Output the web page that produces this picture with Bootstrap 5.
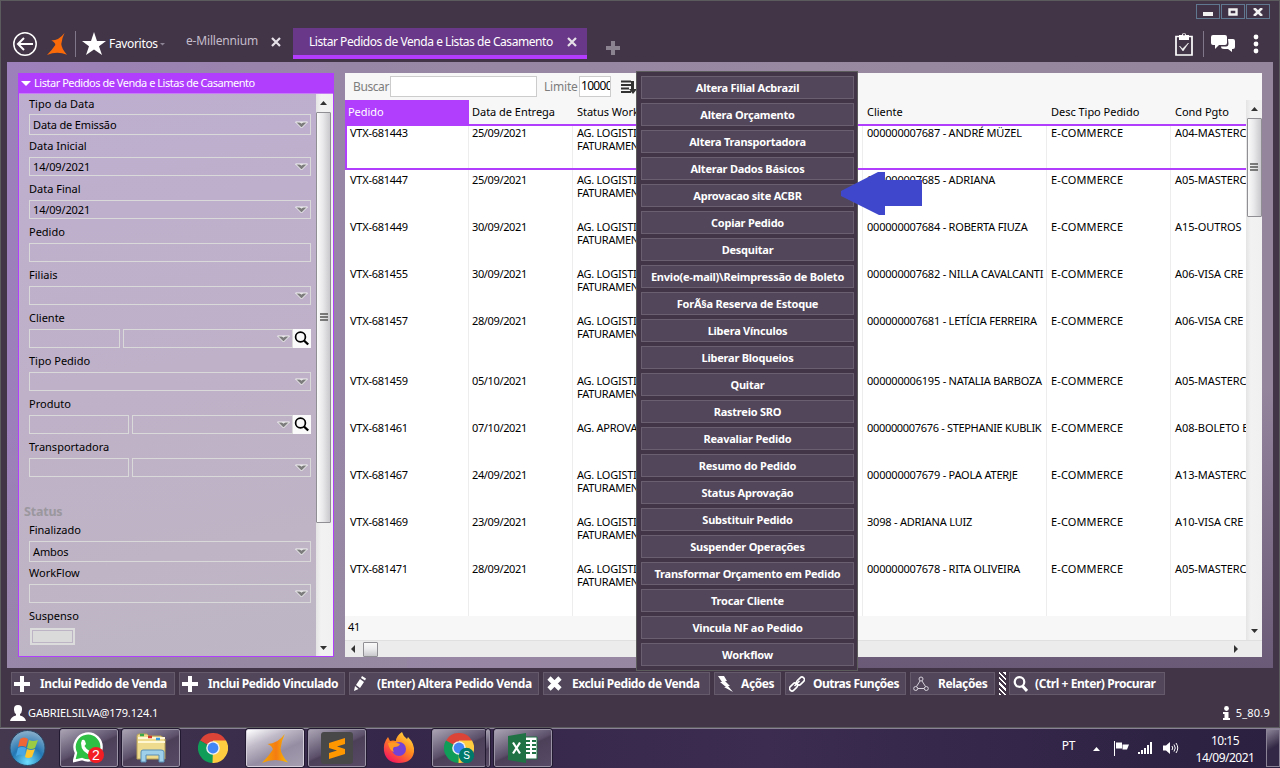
<!DOCTYPE html>
<html lang="pt-BR">
<head>
<meta charset="utf-8">
<title>e-Millennium</title>
<link href="https://cdn.jsdelivr.net/npm/bootstrap@5.3.0/dist/css/bootstrap.min.css" rel="stylesheet">
<style>
body{width:1280px;height:768px;overflow:hidden;font-family:"Noto Sans","Open Sans",sans-serif;font-size:11px;line-height:13px;color:#000;background:#2c2140}
svg{display:block;flex:none}
.win{height:728px;background:#423547;border:1px solid #5b5b5d;color:#fff}
.titlebar{height:27px;padding:3px 9px 0 0;gap:1px}
.wbtn{width:24px;height:15px;border:1px solid #607890;background:#403347}
.topbar{height:34px;padding-left:11px}
.vsep{width:1px;height:26px;background:#80788a}
.tabtxt{font-size:12px;line-height:16px}
.tab-on{width:294px;height:31px;background:#6a3889;border-bottom:4px solid #b43cff;padding:0 10px 0 16px}
.work{height:606px;margin:0 6px;padding:11px;gap:11px;
 background:linear-gradient(180deg,transparent 60%,rgba(150,138,160,.7) 100%) left/400px 100% no-repeat,linear-gradient(0deg,#6a5a77 0,rgba(106,90,119,0) 280px) right/500px 100% no-repeat,linear-gradient(90deg,#9c80bb 0,#9886a6 340px,#9888a0 800px,#94849c 100%)}
.side{width:316px;height:584px;border:1px solid #b13efd;background:linear-gradient(170deg,#bdaed0,#bfb1c8 50%,#beb6c4)}
.side-h{height:20px;background:#b13efd;color:#fff;border-bottom:1px solid #c77bf6;padding-left:2px}
.fields{width:297px;padding-left:10px;height:562px;color:#000;overflow:hidden}
.lab{height:22px;line-height:22px;letter-spacing:0}
.ctl{height:19px;margin-bottom:2px;border:1px solid #d9d9d9;padding:0 2px 0 3px;width:282px;letter-spacing:-.15px}
.ctl-t{height:21px;margin-bottom:0}
.chev{width:13px;height:8px;margin-left:auto}
.look{width:18px;height:19px;background:#fafafa}
.sb{background:linear-gradient(90deg,#e4e4e4,#f2f2f2 30%,#f0f0f0);color:#333}
.thumbv{width:15px;border:1px solid #8f8f94;border-radius:1px;background:linear-gradient(90deg,#fafafa,#e9e9eb 45%,#c9c9cd)}
.thumbh{width:15px;height:15px;border:1px solid #8f8f94;border-radius:1px;background:linear-gradient(180deg,#fafafa,#ececee 45%,#c9c9cd)}
.sheet{width:917px;height:584px;background:#f7f7f7;color:#000}
.inp{border:1px solid #ccc;background:#fff;height:21px}
.grid-h{height:24px;line-height:24px;letter-spacing:-.03px}
.c1{width:124px;padding-left:5px}.c2{width:104px;padding-left:3px}.c3{width:290px;padding-left:4px}.c4{width:184px;padding-left:4px}.c5{width:124px;padding-left:4px}.c6{width:75px;padding-left:4px}
.c1,.c2,.c3,.c4,.c5,.c6{flex:none;overflow:hidden;white-space:nowrap}
.grid-r{height:47px;background:#fff;letter-spacing:-.26px}
.grid-r>div{padding-top:3px;border-right:1px solid #ededed}
.grid-r>.c2{letter-spacing:-.36px}
.grid-r>.c4{letter-spacing:-.21px}
.grid-r>.c5{letter-spacing:.12px}
.grid-r>.c6{border-right:0;letter-spacing:-.08px}
.grid-r.sel{height:46px;border:2px solid #b13efd;border-right:0}
.grid-r.sel>div{padding-top:0}.grid-r.sel .c1{width:122px;padding-left:3px}
.tall{height:60px}.last{height:57px}
.acts{height:32px;padding:4px 0 0 10px}
.act{height:23px;border:1px solid #655a6b;background:#51465a;color:#fff;font-size:12px;font-weight:700;white-space:nowrap;letter-spacing:-.42px}
.grip{width:7px;height:23px;background:repeating-linear-gradient(45deg,#fff 0 1.600px,#423547 1.600px 3.800px)}
.stat{height:27px;padding:0 9px 2px 9px}
.menu{left:636px;top:71px;width:222px;height:600px;background:#423547;border:1px solid #5c5c5c;padding:4px 3px 4px 4px;gap:4px;z-index:5}
.mi{height:23px;flex:none;border:1px solid #6a5f70;background:#51465a;color:#fff;font-weight:700;letter-spacing:-.23px;display:flex;align-items:center;justify-content:center;white-space:nowrap}
.arrow{left:840px;top:171px;z-index:6}
.task{height:40px;background:linear-gradient(90deg,#44384f,#35274a 30%,#3b2c50 60%,#2b2040);border-top:1px solid #8b8196}
.tb{width:58px;height:38px;margin-right:4px;border:1px solid #9b93a6;border-radius:2px;outline:1px solid #221a30;background:linear-gradient(155deg,#aaa3b3 0,#7b7288 28%,#5b4f6a 48%,#4c4059 52%,#564a66 100%)}
.tb-on{background:linear-gradient(155deg,#fff 0,#c0bac8 30%,#958da2 60%,#a59eb0 100%);border-color:#d5d0dc}
.tb-off{background:none;border-color:transparent;outline:0}
.clock{font-size:12px;line-height:17px;letter-spacing:-.5px;color:#fff}
</style>
</head>
<body class="d-flex flex-column position-relative">
<svg width="0" height="0" class="position-absolute">
<symbol id="chev" viewBox="0 0 13 8"><path d="M.5 1h12L6.500 7z" fill="#7c7c7c" stroke="#f4f4f4"/><path d="M4.500 1h4L6.500 2.800z" fill="#e8e8e8"/></symbol>
<symbol id="mag" viewBox="0 0 18 19"><circle cx="7.500" cy="8" r="4.900" fill="none" stroke="#000" stroke-width="1.700"/><path d="M11 11.500l4.200 4" stroke="#000" stroke-width="2.400"/></symbol>
<symbol id="plus" viewBox="0 0 16 16"><path d="M6 0h4v6h6v4h-6v6H6v-6H0V6h6z" fill="#fff"/></symbol>
<symbol id="x" viewBox="0 0 10 10"><path d="M1 1l8 8M9 1L1 9" stroke="#e6e1e9" stroke-width="2.200"/></symbol>
<symbol id="up" viewBox="0 0 7 4"><path d="M0 4L3.500 0 7 4z" fill="#333"/></symbol>
<symbol id="grp" viewBox="0 0 8 9"><path d="M0 1h8M0 4h8M0 7h8" stroke="#555" stroke-width="1.400"/></symbol>
<symbol id="chrome" viewBox="0 0 30 30"><path d="M15 15L2 7.500A15 15 0 0 1 28 7.500z" fill="#db4437"/><path d="M15 15L2 7.500A15 15 0 0 0 15 30l6.500-11z" fill="#0f9d58"/><path d="M15 15l-.5 15A15 15 0 0 0 28 7.500H15z" fill="#ffcd40"/><circle cx="15" cy="15" r="6.800" fill="#f1f1f1"/><circle cx="15" cy="15" r="5.400" fill="#4285f4"/></symbol>
<symbol id="mil" viewBox="0 0 20 22" preserveAspectRatio="none"><path d="M17.500 0Q12 7.500 4.300 7.500 8.500 9.500 8.300 12 5 17 0 22q10-4.500 20-.3-5.500-6-5.700-10.700Q15 5 17.500 0z"/></symbol>
</svg>

<div class="win flex-shrink-0">
 <div class="titlebar d-flex justify-content-end">
  <div class="wbtn d-flex align-items-center justify-content-center"><svg width="10" height="9"><path d="M0 5h10v4H0z" fill="#f2f2f2"/></svg></div>
  <div class="wbtn d-flex align-items-center justify-content-center"><svg width="10" height="8"><path d="M1.500 1.500h7v5h-7z" fill="none" stroke="#f2f2f2" stroke-width="2.400"/></svg></div>
  <div class="wbtn d-flex align-items-center justify-content-center"><svg width="10" height="8"><path d="M1 0l8 8M9 0L1 8" stroke="#f2f2f2" stroke-width="2.600"/></svg></div>
 </div>
 <div class="topbar d-flex">
  <div class="d-flex align-items-center flex-shrink-0" style="height:32px;width:154px">
   <svg width="26" height="26" viewBox="0 0 26 26" fill="none" stroke="#fff"><circle cx="13" cy="13" r="11.200" stroke-width="1.500"/><path d="M21 13H6M12 7l-6 6 6 6" stroke-width="2"/></svg>
   <svg style="margin-left:9px" width="20" height="22" fill="#fb6a09"><use href="#mil" width="20" height="22"/></svg>
   <div class="vsep" style="margin:0 6px 0 8px"></div>
   <svg width="24" height="24" viewBox="0 0 24 24"><path d="M12 0l3 9h9l-7 5.200 3 8.800-8-5.500L4 23l3-8.800L0 9h9z" fill="#fff"/></svg>
   <span class="tabtxt" style="margin-left:3px;letter-spacing:-.33px">Favoritos</span>
   <svg width="6" height="4" style="margin-left:2px"><path d="M0 1h5L2.500 3.500z" fill="#8c8394"/></svg>
  </div>
  <div class="d-flex align-items-start flex-shrink-0" style="margin-left:20px;padding-top:5px;width:107px">
   <span class="tabtxt" style="color:#c5bdcb;letter-spacing:-.18px">e-Millennium</span><svg class="ms-auto" style="margin:4px 12px 0 0" width="10" height="10"><use href="#x"/></svg>
  </div>
  <div class="tab-on d-flex align-items-center"><span class="tabtxt text-nowrap" style="letter-spacing:-.45px">Listar Pedidos de Venda e Listas de Casamento</span><svg class="ms-auto" width="10" height="10"><use href="#x"/></svg></div>
  <svg style="margin:13px 0 0 19px" width="14" height="14" viewBox="0 0 14 14"><path d="M5 0h4v5h5v4H9v5H5V9H0V5h5z" fill="#8b838f"/></svg>
  <div class="d-flex align-items-center ms-auto" style="height:32px;padding-right:20px">
   <svg width="18" height="24" viewBox="0 0 18 24"><path d="M1 4.500h16V23H1z" fill="none" stroke="#fff" stroke-width="1.700"/><path d="M4 3h3a2 2 0 0 1 4 0h3v5H4z" fill="#fff"/><circle cx="9" cy="2.500" r="1" fill="#423547"/><path d="M4.500 14l3 3 6-6-5.500 8z" fill="#fff" stroke="#fff" stroke-width=".6"/></svg>
   <div class="vsep" style="margin:0 7px 0 10px"></div>
   <svg width="25" height="18" viewBox="0 0 25 18" fill="#fff"><path d="M2 0h12q2 0 2 2v6q0 2-2 2H8l-4 4v-4H2Q0 10 0 8V2q0-2 2-2z"/><path d="M17 4h5q2 0 2 2v6q0 2-2 2h-1v3l-4-3h-4q-3 0-3-2.500h5q2.500 0 2.500-3z"/></svg>
   <svg style="margin-left:17px" width="6" height="20" fill="#fff"><circle cx="3" cy="3" r="2.400"/><circle cx="3" cy="10" r="2.400"/><circle cx="3" cy="17" r="2.400"/></svg>
  </div>
 </div>

 <div class="work d-flex">
  <div class="side flex-shrink-0">
   <div class="side-h d-flex align-items-center"><svg width="10" height="5"><path d="M0 0h10L5 5z" fill="#fff"/></svg><span class="text-nowrap" style="letter-spacing:-.47px;margin-left:3px;padding-bottom:3px">Listar Pedidos de Venda e Listas de Casamento</span></div>
   <div class="d-flex">
    <div class="fields">
     <div class="lab" style="height:20px;line-height:19px">Tipo da Data</div><div class="ctl ctl-t d-flex align-items-center">Data de Emissão<svg class="chev"><use href="#chev"/></svg></div>
     <div class="lab">Data Inicial</div><div class="ctl d-flex align-items-center">14/09/2021<svg class="chev"><use href="#chev"/></svg></div>
     <div class="lab">Data Final</div><div class="ctl d-flex align-items-center">14/09/2021<svg class="chev"><use href="#chev"/></svg></div>
     <div class="lab">Pedido</div><div class="ctl"></div>
     <div class="lab">Filiais</div><div class="ctl d-flex align-items-center"><svg class="chev"><use href="#chev"/></svg></div>
     <div class="lab">Cliente</div>
     <div class="d-flex"><div class="ctl" style="width:91px;margin-right:3px"></div><div class="ctl d-flex align-items-center" style="width:170px"><svg class="chev"><use href="#chev"/></svg></div><div class="look"><svg width="18" height="19"><use href="#mag"/></svg></div></div>
     <div class="lab">Tipo Pedido</div><div class="ctl d-flex align-items-center"><svg class="chev"><use href="#chev"/></svg></div>
     <div class="lab">Produto</div>
     <div class="d-flex"><div class="ctl" style="width:100px;margin-right:3px"></div><div class="ctl d-flex align-items-center" style="width:161px"><svg class="chev"><use href="#chev"/></svg></div><div class="look"><svg width="18" height="19"><use href="#mag"/></svg></div></div>
     <div class="lab">Transportadora</div>
     <div class="d-flex"><div class="ctl" style="width:100px;margin-right:3px"></div><div class="ctl d-flex align-items-center" style="width:179px"><svg class="chev"><use href="#chev"/></svg></div></div>
     <div class="fw-bold" style="height:40px;padding-top:26px;margin-left:-5px;font-size:12.500px;letter-spacing:-.2px;color:#9b979e">Status</div>
     <div class="lab">Finalizado</div><div class="ctl ctl-t d-flex align-items-center">Ambos<svg class="chev"><use href="#chev"/></svg></div>
     <div class="lab">WorkFlow</div><div class="ctl d-flex align-items-center"><svg class="chev"><use href="#chev"/></svg></div>
     <div class="lab">Suspenso</div>
     <div style="width:45px;height:17px;margin:1px;border:2px solid #dcdcdc"><div class="h-100" style="border:1px solid #bdb4c6;background:#dadada"></div></div>
    </div>
    <div class="sb d-flex flex-column align-items-center" style="width:17px;height:562px;padding-right:2px">
     <svg style="margin:7px 0" width="7" height="4"><use href="#up"/></svg>
     <div class="thumbv d-flex align-items-center justify-content-center" style="height:411px"><svg width="8" height="9"><use href="#grp"/></svg></div>
     <svg class="mt-auto" style="margin-bottom:6px;transform:scaleY(-1)" width="7" height="4"><use href="#up"/></svg>
    </div>
   </div>
  </div>

  <div class="sheet flex-shrink-0">
   <div class="d-flex align-items-center" style="height:27px;padding-left:8px;font-size:12px;letter-spacing:-.4px;color:#7d7d7d">
    <span style="width:37px">Buscar</span><div class="inp" style="width:147px"></div>
    <span style="margin-left:7px;width:35px;letter-spacing:-.2px">Limite</span><div class="inp text-black overflow-hidden" style="width:32px;line-height:18px;padding-left:1px;letter-spacing:-.7px">10000</div>
    <svg style="margin-left:10px" width="18" height="14" viewBox="0 0 18 14"><path d="M0 1.500h10M0 5h10M0 8.500h8M0 12h10" stroke="#333" stroke-width="2.200"/><path d="M10 1h3v8h3l-4 5-4-5h2z" fill="#333"/></svg>
   </div>
   <div class="d-flex">
    <div style="width:901px" class="overflow-hidden">
     <div class="grid-h d-flex"><div class="c1 text-white" style="background:#b13efd;padding-left:3px">Pedido</div><div class="c2">Data de Entrega</div><div class="c3">Status Workflow</div><div class="c4">Cliente</div><div class="c5">Desc Tipo Pedido</div><div class="c6">Cond Pgto</div></div>
     <div class="grid-r sel d-flex"><div class="c1">VTX-681443</div><div class="c2">25/09/2021</div><div class="c3">AG. LOGISTICA<br>FATURAMENTO</div><div class="c4">000000007687 - ANDRÉ MÜZEL</div><div class="c5">E-COMMERCE</div><div class="c6">A04-MASTERC</div></div>
     <div class="grid-r d-flex"><div class="c1">VTX-681447</div><div class="c2">25/09/2021</div><div class="c3">AG. LOGISTICA<br>FATURAMENTO</div><div class="c4">000000007685 - ADRIANA</div><div class="c5">E-COMMERCE</div><div class="c6">A05-MASTERC</div></div>
     <div class="grid-r d-flex"><div class="c1">VTX-681449</div><div class="c2">30/09/2021</div><div class="c3">AG. LOGISTICA<br>FATURAMENTO</div><div class="c4">000000007684 - ROBERTA FIUZA</div><div class="c5">E-COMMERCE</div><div class="c6">A15-OUTROS</div></div>
     <div class="grid-r d-flex"><div class="c1">VTX-681455</div><div class="c2">30/09/2021</div><div class="c3">AG. LOGISTICA<br>FATURAMENTO</div><div class="c4">000000007682 - NILLA CAVALCANTI</div><div class="c5">E-COMMERCE</div><div class="c6">A06-VISA CRE</div></div>
     <div class="grid-r tall d-flex"><div class="c1">VTX-681457</div><div class="c2">28/09/2021</div><div class="c3">AG. LOGISTICA<br>FATURAMENTO</div><div class="c4">000000007681 - LETÍCIA FERREIRA</div><div class="c5">E-COMMERCE</div><div class="c6">A06-VISA CRE</div></div>
     <div class="grid-r d-flex"><div class="c1">VTX-681459</div><div class="c2">05/10/2021</div><div class="c3">AG. LOGISTICA<br>FATURAMENTO</div><div class="c4">000000006195 - NATALIA BARBOZA</div><div class="c5">E-COMMERCE</div><div class="c6">A05-MASTERC</div></div>
     <div class="grid-r d-flex"><div class="c1">VTX-681461</div><div class="c2">07/10/2021</div><div class="c3">AG. APROVA</div><div class="c4" style="letter-spacing:-.32px">000000007676 - STEPHANIE KUBLIK</div><div class="c5">E-COMMERCE</div><div class="c6">A08-BOLETO B</div></div>
     <div class="grid-r d-flex"><div class="c1">VTX-681467</div><div class="c2">24/09/2021</div><div class="c3">AG. LOGISTICA<br>FATURAMENTO</div><div class="c4">000000007679 - PAOLA ATERJE</div><div class="c5">E-COMMERCE</div><div class="c6">A13-MASTERC</div></div>
     <div class="grid-r d-flex"><div class="c1">VTX-681469</div><div class="c2">23/09/2021</div><div class="c3">AG. LOGISTICA<br>FATURAMENTO</div><div class="c4">3098 - ADRIANA LUIZ</div><div class="c5">E-COMMERCE</div><div class="c6">A10-VISA CRE</div></div>
     <div class="grid-r last d-flex"><div class="c1">VTX-681471</div><div class="c2">28/09/2021</div><div class="c3">AG. LOGISTICA<br>FATURAMENTO</div><div class="c4">000000007678 - RITA OLIVEIRA</div><div class="c5">E-COMMERCE</div><div class="c6">A05-MASTERC</div></div>
     <div style="height:24px;padding:4px 0 0 3px;letter-spacing:-.3px">41</div>
    </div>
    <div class="sb d-flex flex-column align-items-center" style="width:16px;height:540px">
     <svg style="margin:7px 0" width="7" height="4"><use href="#up"/></svg>
     <div class="thumbv d-flex align-items-center justify-content-center" style="height:99px"><svg width="8" height="9"><use href="#grp"/></svg></div>
     <svg class="mt-auto" style="margin-bottom:7px;transform:scaleY(-1)" width="7" height="4"><use href="#up"/></svg>
    </div>
   </div>
   <div class="d-flex align-items-center" style="height:17px;width:917px;background:#ececec;border-top:1px solid #e0e0e0">
    <svg style="margin-left:6px" width="4" height="8"><path d="M4 0v8L0 4z" fill="#333"/></svg><div class="thumbh" style="margin-left:8px"></div><svg class="ms-auto" style="margin-right:24px" width="4" height="8"><path d="M0 0v8l4-4z" fill="#333"/></svg>
   </div>
  </div>
 </div>

 <div class="acts d-flex">
  <div class="act d-flex align-items-center" style="width:164px;padding-left:2px;margin-right:4px"><svg width="16" height="16"><use href="#plus"/></svg><span style="margin-left:10px">Inclui Pedido de Venda</span></div>
  <div class="act d-flex align-items-center" style="width:166px;padding-left:2px;margin-right:4px"><svg width="16" height="16"><use href="#plus"/></svg><span style="margin-left:10px">Inclui Pedido Vinculado</span></div>
  <div class="act d-flex align-items-center" style="width:190px;padding-left:4px;margin-right:4px"><svg width="12" height="16" viewBox="0 0 12 16" fill="#fff"><path d="M0 15l1-5 3.500 3zM2 9l4-6 4 3-4 6zM7 2l1-2 4 2.500-1 2z"/></svg><span style="margin-left:11px;letter-spacing:-.36px">(Enter) Altera Pedido Venda</span></div>
  <div class="act d-flex align-items-center" style="width:167px;padding-left:3px;margin-right:4px"><svg width="15" height="15"><path d="M2 2l11 11M13 2L2 13" stroke="#fff" stroke-width="4.600"/></svg><span style="margin-left:10px">Exclui Pedido de Venda</span></div>
  <div class="act d-flex align-items-center" style="width:67px;padding-left:3px;margin-right:4px"><svg width="15" height="16"><path d="M0 0h6l3 5H7l5 5h-2l5 6-9-5h2L2 6h2z" fill="#fff"/></svg><span style="margin-left:8px">Ações</span></div>
  <div class="act d-flex align-items-center" style="width:121px;padding-left:3px;margin-right:4px"><svg width="16" height="16" fill="none" stroke="#fff" stroke-width="1.600"><rect x="7" y="2.500" width="9" height="5" rx="2.500" transform="rotate(-45 11.500 5)"/><rect x="0" y="8.500" width="9" height="5" rx="2.500" transform="rotate(-45 4.500 11)"/><path d="M5.500 10l5-5"/></svg><span style="margin-left:8px;letter-spacing:-.5px">Outras Funções</span></div>
  <div class="act d-flex align-items-center" style="width:85px;padding-left:2px;margin-right:4px"><svg width="16" height="16" fill="none" stroke="#d8d3dc"><circle cx="8" cy="3" r="2"/><circle cx="2.700" cy="12.500" r="2"/><circle cx="13.300" cy="12.500" r="2"/><path d="M7 5l-3.500 5.500M9 5l3.500 5.500M5 12.500h6"/></svg><span style="margin-left:9px">Relações</span></div>
  <div class="grip"></div>
  <div class="act d-flex align-items-center" style="width:156px;padding-left:3px;margin-left:3px"><svg width="15" height="16"><circle cx="6.500" cy="6" r="4.800" fill="none" stroke="#fff" stroke-width="2.200"/><path d="M9.500 10l4.500 5" stroke="#fff" stroke-width="3"/></svg><span style="margin-left:7px">(Ctrl + Enter) Procurar</span></div>
 </div>
 <div class="stat d-flex align-items-center"><svg width="16" height="16"><path d="M8 0q4.500 0 4 5-.4 3.500-2 4v1.500q5 1 6 5.500H0q1-4.500 6-5.500V9Q4.400 8.500 4 5 3.500 0 8 0z" fill="#fff"/></svg><span class="overflow-hidden text-nowrap" style="margin-left:2px;width:130px;letter-spacing:-.13px">GABRIELSILVA@179.124.1</span>
 <svg class="ms-auto" width="7" height="14" fill="#fff"><circle cx="3.500" cy="2.500" r="2.400"/><path d="M0 6h5.500v6H7v2H0v-2h1.500V8H0z"/></svg><span style="margin-left:6px;letter-spacing:.2px">5_80.9</span></div>
</div>

<div class="menu position-absolute d-flex flex-column">
 <div class="mi">Altera Filial Acbrazil</div><div class="mi">Altera Orçamento</div><div class="mi">Altera Transportadora</div><div class="mi">Alterar Dados Básicos</div><div class="mi">Aprovacao site ACBR</div><div class="mi">Copiar Pedido</div><div class="mi">Desquitar</div><div class="mi">Envio(e-mail)\Reimpressão de Boleto</div><div class="mi">ForÃ§a Reserva de Estoque</div><div class="mi">Libera Vínculos</div><div class="mi">Liberar Bloqueios</div><div class="mi">Quitar</div><div class="mi">Rastreio SRO</div><div class="mi">Reavaliar Pedido</div><div class="mi">Resumo do Pedido</div><div class="mi">Status Aprovação</div><div class="mi">Substituir Pedido</div><div class="mi">Suspender Operações</div><div class="mi">Transformar Orçamento em Pedido</div><div class="mi">Trocar Cliente</div><div class="mi">Vincula NF ao Pedido</div><div class="mi">Workflow</div>
</div>
<svg class="arrow position-absolute" width="83" height="45"><path d="M1 20L38 1h7v8h37v26H45v9h-6L1 25z" fill="#3f48cc"/></svg>

<div class="task d-flex">
 <svg style="margin:1px 14px 0 9px" width="37" height="37" viewBox="0 0 37 37"><defs><radialGradient id="orb" cx=".5" cy=".9" r=".9"><stop offset="0" stop-color="#6fe0ff"/><stop offset=".5" stop-color="#2377b4"/><stop offset="1" stop-color="#8fb2cc"/></radialGradient></defs><circle cx="18.500" cy="18" r="17.500" fill="url(#orb)" stroke="#2b4765"/><path d="M11 9q4-3 8 0l-2 8q-4-2-8 0z" fill="#ee6536"/><path d="M20 10q4 2 9 0l-3 8q-4 2-8 0z" fill="#9acb43"/><path d="M9 18q4-2 8 0l-2 8q-4-3-8 0z" fill="#4aa7e6"/><path d="M18 19q4 2 8 0l-3 8q-4 2-7 0z" fill="#fdc62f"/></svg>
 <div class="tb d-flex align-items-center justify-content-center"><svg width="32" height="32" viewBox="0 0 32 32"><path d="M1 29l2-8A13.500 13.500 0 1 1 9 27z" fill="#2ec045" stroke="#fff" stroke-width="2.400"/><path d="M9 8q2-1 3 1l1 3-1.500 2q2 4 6 5.500l2-2 4 2q0 4-4 4Q8 21 8 11z" fill="#fff"/><circle cx="23" cy="23" r="8" fill="#f31d24"/><text x="23" y="28" font-size="14" text-anchor="middle" fill="#fff" font-family="Liberation Sans">2</text></svg></div>
 <div class="tb d-flex align-items-center justify-content-center"><svg width="34" height="32" viewBox="0 0 34 32"><path d="M3 4q0-2 2-2h8l2 2h12l4 3v20H3z" fill="#eedb8d" stroke="#b9a257"/><path d="M4 10h27M4 6h27" stroke="#fff7d2" stroke-width="2"/><path d="M6 3h4" stroke="#39a845" stroke-width="2.500"/><path d="M14 5h4" stroke="#d3392b" stroke-width="2.500"/><path d="M22 7h4" stroke="#3a9be0" stroke-width="2.500"/><path d="M7 30V20q0-2 2-2h18q3 0 3 2v10h-5v-7H12v7z" fill="#9fd0ea" stroke="#588fb5"/></svg></div>
 <div class="tb tb-off d-flex align-items-center justify-content-center"><svg width="30" height="30"><use href="#chrome"/></svg></div>
 <div class="tb tb-on d-flex align-items-center justify-content-center"><svg width="26" height="29"><defs><linearGradient id="mg"><stop offset="0" stop-color="#f6a800"/><stop offset=".55" stop-color="#f57c12"/><stop offset="1" stop-color="#f6c000"/></linearGradient></defs><use href="#mil" width="26" height="29" fill="url(#mg)"/></svg></div>
 <div class="tb d-flex align-items-center justify-content-center"><svg width="32" height="32"><rect width="32" height="32" rx="3" fill="#484848"/><path d="M8 11l16-5v6l-8 2.500 8 2.500v5L8 27v-6l8-2.500L8 16z" fill="#ff9800"/></svg></div>
 <div class="tb tb-off d-flex align-items-center justify-content-center"><svg width="32" height="32" viewBox="0 0 32 32"><defs><linearGradient id="ff" x1="1" y1="0" x2=".3" y2="1"><stop offset="0" stop-color="#fff04a"/><stop offset=".5" stop-color="#ff8a1e"/><stop offset="1" stop-color="#f5185c"/></linearGradient></defs><path d="M1 19Q0 11 5 5l2 4q3-1 6 0 0-5 6-9 1 4 5 7l1-2q7 7 6 15-2 11-15 11T1 19z" fill="url(#ff)"/><circle cx="16" cy="17" r="7" fill="#7443d5"/><path d="M5 11q6-2 12 1-1 3-6 3-2 2 0 5-5-2-6-9z" fill="#ff9b25"/></svg></div>
 <div class="d-flex"><div class="tb m-0 d-flex align-items-center justify-content-center" style="width:54px"><svg width="31" height="30" viewBox="0 0 31 30"><use href="#chrome" width="30" height="30"/><circle cx="22.500" cy="22.500" r="7.700" fill="#00796b"/><text x="22.500" y="26" font-size="10" text-anchor="middle" fill="#fff" font-family="Liberation Sans">S</text></svg></div><div class="tb" style="width:4px;border-left:0"></div></div>
 <div class="tb d-flex align-items-center justify-content-center"><svg width="30" height="30" viewBox="0 0 30 30"><path d="M16 4h13v22H16z" fill="#fff" stroke="#207245"/><path d="M18 8h4M24 8h4M18 12h4M24 12h4M18 16h4M24 16h4M18 20h4M24 20h4" stroke="#207245" stroke-width="2"/><path d="M0 3l18-3v30L0 27z" fill="#207245"/><path d="M5 9.500l7 11M12 9.500l-7 11" stroke="#fff" stroke-width="2.200"/></svg></div>
 <div class="d-flex ms-auto text-white">
  <span style="margin-top:9px;font-size:12px;line-height:16px;letter-spacing:-.4px">PT</span>
  <svg style="margin:18px 0 0 18px" width="7" height="4"><path d="M0 4L3.500 0 7 4z" fill="#fff"/></svg>
  <svg style="margin:12px 0 0 14px" width="15" height="15" fill="#fff"><path d="M.5 0v15" stroke="#fff"/><path d="M2 1.500h6v6H2zM8.500 3.500H15L13 8.500H8.500z"/></svg>
  <svg style="margin:13px 0 0 9px" width="16" height="12" fill="#fff"><path d="M0 10h2v2H0zM3 8h2v4H3zM6 6h2v6H6zM9 3h2v9H9zM12 0h2v12h-2z"/></svg>
  <svg style="margin:12px 0 0 9px" width="16" height="14" fill="none" stroke="#fff"><path d="M0 4.500h3L7 1v12L3 9.500H0z" fill="#fff" stroke="none"/><path d="M9 5q1.500 2 0 4M11 3.500q2.500 3.500 0 7M13 2q3.500 5 0 10"/></svg>
  <div class="clock text-center" style="width:62px;margin:3px 10px 0 15px">10:15<br>14/09/2021</div>
  <div style="width:14px;height:38px;border:1px solid #8b8497;background:linear-gradient(150deg,#8b8497,#332845 50%)"></div>
 </div>
</div>
<script src="https://cdn.jsdelivr.net/npm/bootstrap@5.3.0/dist/js/bootstrap.bundle.min.js"></script>
</body>
</html>
